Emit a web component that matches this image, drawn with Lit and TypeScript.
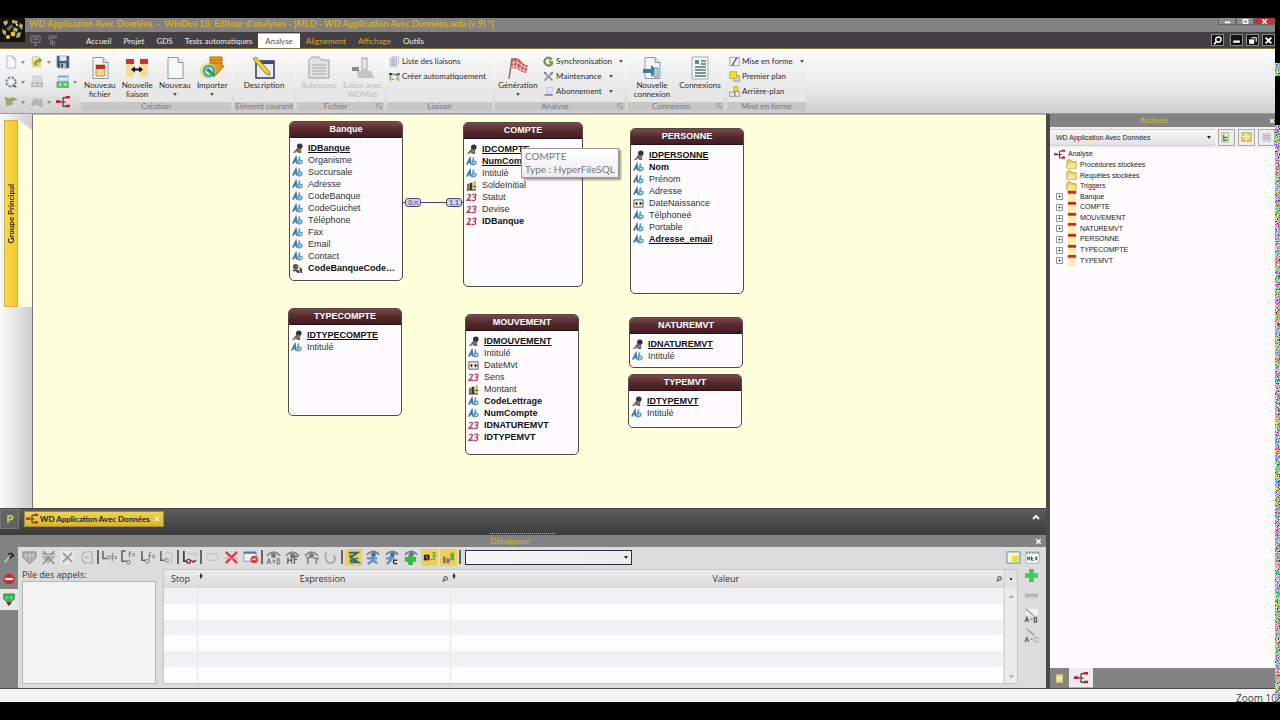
import { LitElement, html, css, svg, nothing } from "lit";
import { customElement, property } from "lit/decorators.js";
import { styleMap } from "lit/directives/style-map.js";
import { classMap } from "lit/directives/class-map.js";

const page = svg`<path d="M5 1.5h10l5 5v16H5z" fill="#f6f8fb" stroke="#8e96a3"/><path d="M15 1.5v5h5" fill="#dde3ea" stroke="#8e96a3"/>`;
const eye = svg`<path d="M1 6Q8 -1 15 6" fill="none" stroke="#888" stroke-width="2"/><circle cx="8" cy="6" r="2.6" fill="#777"/>`;
const eyeBlue = svg`<path d="M2 5Q9 -2 15 5" fill="none" stroke="#6f7f92" stroke-width="2"/><circle cx="9" cy="5" r="2.6" fill="#526a8a"/>`;
const tree = svg`<path d="M1 8h6M8 3v10M8 3h3M8 8h3M8 13h3" stroke="#3a2a2a" stroke-width="1.3" fill="none"/><path d="M0 6h5v3H0zM11 1h5v3h-5zM11 11h5v3h-5z" fill="#c3202c"/>`;

// [viewBox, drawing]
const ICONS: Record<string, [string, unknown]> = {
  logo: ["0 0 25 24", svg`<rect width="25" height="24" fill="#15130c"/><path d="M3 4l4-2 1 3-3 3zM12 2l6 1-1 3-5-1zM20 5l3 2-1 5-3-3zM2 11l4 2 0 4-3-1zM17 15l4-1-1 5-4 1zM14 9l4 2-1 3-4-1z" fill="#b5b277"/><path d="M9 8l3-2 1 3-4 4-3-2z" fill="#6a6745"/><circle cx="13" cy="16" r="2.400" fill="#e7c52b"/><circle cx="8" cy="19" r="2" fill="#e0d35a"/><circle cx="17" cy="7" r="1.300" fill="#e7c52b"/>`],
  quickA: ["0 0 12 12", svg`<path d="M1 1h10v7H1zM3 3h6M3 5h6M6 8v3M4 11h4" fill="none" stroke="#8c8a8c"/>`],
  quickB: ["0 0 12 12", svg`<path d="M1 1h10M3 3h8M1 4h3v7M6 5v6h3M5 8h5" fill="none" stroke="#8c8a8c"/>`],
  blank: ["0 0 24 24", page],
  open: ["0 0 24 24", svg`<path d="M4 3h10l4 4v12H4z" fill="#f3ead0" stroke="#b9ae85"/><path d="M3 8h16l-1 13H4z" fill="#ecd277"/><path d="M7 18q-1-9 8-11V3l6 6-6 6v-4q-4 1-3 7z" fill="#6fae4c"/>`],
  save: ["0 0 24 24", svg`<path d="M2 2h20v20H4l-2-2z" fill="#4b5e75" stroke="#2e3c4e"/><path d="M6 2h12v8H6z" fill="#dfe8f1"/><path d="M7 14h10v8H7z" fill="#b7c2ce"/><path d="M9 15h3v6H9z" fill="#33414f"/>`],
  gear: ["0 0 24 24", svg`<circle cx="12" cy="12" r="8" fill="none" stroke="#5c7f9e" stroke-width="3" stroke-dasharray="4 2.3"/><circle cx="12" cy="12" r="5.5" fill="#fff" stroke="#9ab4ca"/><path d="M16 17l5 4" stroke="#333" stroke-width="2"/>`],
  stackGrey: ["0 0 24 24", svg`<path d="M4 2h16v8H4z" fill="#ddd" stroke="#bbb"/><path d="M2 12h20v9H2z" fill="#b5b5b5"/><path d="M5 14h5v5H5zM13 14h6v5h-6z" fill="#d8d8d8"/>`],
  stackGreen: ["0 0 24 24", svg`<path d="M4 1h17v9H4z" fill="#dfeaf6" stroke="#8fb0d0"/><path d="M4 3h17" stroke="#6c97c0" stroke-width="2"/><path d="M1 11h21v11H1z" fill="#52b561"/><path d="M5 14h5v5H5zM13 14h6v5h-6z" fill="#aee3b2"/>`],
  undo: ["0 0 24 24", svg`<path d="M2 4l3 14 11-3-4-3q4-5 10-3-5-7-13-2z" fill="#9aac72" stroke="#7d8d5d"/>`],
  redo: ["0 0 24 24", svg`<path d="M3 17Q4 5 14 7l4 4 2-5 1 14-11-4 4-2q-5-4-8 4z" fill="#bdbdbd" stroke="#8d8d8d"/>`],
  tree: ["0 0 16 16", tree],
  newFile: ["0 0 24 24", svg`${page}<path d="M8 9h9v11H8z" fill="#f8d98c" stroke="#b88c3a"/><path d="M8 9h9v4H8z" fill="#c62b2b"/>`],
  link: ["0 0 24 24", svg`<path d="M1 3h8v18H1zM15 3h8v18h-8z" fill="#f4dd9b"/><path d="M1 3h8v5H1zM15 3h8v5h-8z" fill="#cf2f33"/><path d="M7 13.500h10" stroke="#111" stroke-width="2"/><path d="M10 10.500v6l-4-3zM14 10.500v6l4-3z" fill="#111"/>`],
  importer: ["0 0 24 24", svg`<path d="M10 1h12v9h2l-8 9-7-9h1z" fill="#e79a1d" stroke="#b56c0d"/><path d="M10 4h12M10 7h12" stroke="#b56c0d"/><circle cx="8" cy="15" r="8" fill="#e6e24f" opacity=".75"/><circle cx="9" cy="15" r="5" fill="#cfe8dc" stroke="#43a0c8" stroke-width="2.500"/><path d="M7 13l8 7" stroke="#3b9a4a" stroke-width="3"/>`],
  describe: ["0 0 24 24", svg`<path d="M4 5h18v17H4z" fill="#e4ecf8" stroke="#2f3e5c" stroke-width="1.500"/><path d="M4 5h18v3H4z" fill="#3a4d73"/><path d="M1 3l3-2 13 14 1 4-4-1z" fill="#f0cf3c" stroke="#a18324"/>`],
  folder: ["0 0 24 24", svg`<path d="M2 4l3-3h7l2 3h8v18H2z" fill="#e2e2e2" stroke="#9d9d9d"/><path d="M5 9h14M5 12h14M5 15h14M5 18h14" stroke="#a5a5a5"/>`],
  wdmap: ["0 0 24 24", svg`<path d="M11 1h7v15h-7z" fill="#c9c9c9"/><path d="M7 15h14l3 7H8z" fill="#c4c4c4"/><path d="M2 11h7v4H2z" fill="#8b8b8b"/><path d="M13 4h3v8h-3z" fill="#e8e8e8"/>`],
  list: ["0 0 16 16", svg`<path d="M2 3h9v12H2z" fill="#dcdde6" stroke="#9b9db0"/><path d="M4 1h10v11" fill="none" stroke="#b6b7c4"/><path d="M4 6h5M4 9h5M4 12h5" stroke="#777b96"/>`],
  auto: ["0 0 16 16", svg`<path d="M0 3h5v3H0z" fill="#3b3b3b"/><path d="M11 3h5v3h-5z" fill="#3b8a3b"/><path d="M2 6v6h5M9 6h3M13 6v6h-3M6 5h4" stroke="#333" fill="none"/><path d="M0 11h4v3H0zM11 11h5v3h-5z" fill="#c9c46a"/>`],
  flag: ["0 0 24 24", svg`<path d="M6 2L3 23" stroke="#777" stroke-width="1.500"/><path d="M6 3q5-3 9 2t7 4l-2 8q-4 0-7-3t-9-1z" fill="#cf5357"/><path d="M8 4l-1 9M12 4l-2 9M16 7l-2 8M19 9l-2 8M6 7q5-2 8 1t8 4M5 11q5-2 8 1t7 3" stroke="#f5d5d5" fill="none"/>`],
  sync: ["0 0 16 16", svg`<path d="M13 5Q8 0 4 4t0 8q4 4 9 0V9H9" fill="none" stroke="#6b8f4a" stroke-width="3"/><path d="M12 1v6H7z" fill="#8fb35c"/>`],
  tools: ["0 0 16 16", svg`<path d="M2 2l12 12M14 2L2 14" stroke="#8d97a3" stroke-width="2.500"/><path d="M1 1l4 1-2 3zM15 1l-4 1 2 3z" fill="#697482"/>`],
  laptop: ["0 0 16 16", svg`<path d="M6 2h8l-1 8H6z" fill="#e3e6f0" stroke="#b6bbcc"/><path d="M2 12h12v2H2z" fill="#5c6a9e"/>`],
  newConn: ["0 0 24 24", svg`${page}<path d="M3 13h8V9l7 6-7 6v-4H3z" fill="#3f7ca8"/><path d="M14 12h4v9h-4z" fill="#bcd3e2" stroke="#5e8aa8"/>`],
  conns: ["0 0 24 24", svg`<path d="M4 1h16v22H4z" fill="#f2f6f8" stroke="#9badb8"/><path d="M7 4h4v4H7z" fill="#4c9a6b"/><path d="M13 5h5M13 8h5M7 11h11M7 14h11M7 17h11M7 20h11" stroke="#5c6f7c" stroke-width="1.500"/>`],
  format: ["0 0 16 16", svg`<path d="M1 2h14v12H1z" fill="#eef1f6" stroke="#7d8595"/><path d="M5 13l6-10" stroke="#333" stroke-width="1.500"/><path d="M9 3h4M4 13h4" stroke="#555"/>`],
  front: ["0 0 16 16", svg`<path d="M7 7h8v8H7z" fill="#ddd" stroke="#777"/><path d="M1 1h10v10H1z" fill="#f2da3a" stroke="#b79c1e"/>`],
  back: ["0 0 16 16", svg`<path d="M7 1h6v8H7z" fill="#f2da3a" stroke="#b79c1e"/><path d="M1 9h7v6H1zM9 8h6v7H9z" fill="#eee" stroke="#777"/>`],
  launcher: ["0 0 8 8", svg`<path d="M1 7V1h6M3 3l4 4M7 4v3H4" fill="none" stroke="#888"/>`],
  key: ["0 0 12 12", svg`<circle cx="8.500" cy="3.500" r="3" fill="#333"/><path d="M6 5L1 11h3l1-2 2 2h3V6z" fill="#6a6558"/><path d="M2 10h3M7 8h2" stroke="#c8b24a"/>`],
  keyc: ["0 0 12 12", svg`<circle cx="4" cy="4" r="3" fill="#5c574b"/><path d="M1 7h4l3 1v3H6L4 9H1zM8 5l3 1v5H9z" fill="#4a4a3f"/><path d="M5 4h4" stroke="#b9a84a"/>`],
  ab: ["0 0 12 12", svg`<path d="M.800 9.500L4.300 2.500l1.200 7M2.200 7h3" fill="none" stroke="#3d7fa5" stroke-width="1.800"/><path d="M8.300 1.500L6.800 9.300q3.500.500 4-2 .300-2-3-1.400" fill="none" stroke="#5b9cc0" stroke-width="1.800"/>`],
  n23: ["0 0 12 12", svg`<path d="M1.500 3.500q3.500-2 3.300.500Q4.500 6 1 9h4.500M7 3q4-1.500 3.700.500 0 2-2.500 2.200 3 .300 2 2.500Q9 10 6.200 9" fill="none" stroke="#b8485c" stroke-width="1.500"/>`],
  money: ["0 0 12 12", svg`<path d="M1 4h3v7H1z" fill="#77853f"/><path d="M4 3h3v8H4z" fill="#3a3a2e"/><path d="M8 1h3v10H8z" fill="#e0c42a"/><path d="M8 7h3M1 11h10" stroke="#333"/>`],
  date: ["0 0 12 12", svg`<path d="M1 2h10v8H1z" fill="#f4f4f4" stroke="#555"/><path d="M2 6h3M4 4v4M7 6h4M8 4v4" stroke="#333" stroke-width="1.300"/>`],
  treeFolder: ["0 0 12 12", svg`<path d="M1 3l1-2h3l1 2h5v7H1z" fill="#f0d768" stroke="#b99b32"/><path d="M3 5h8l-1 5H1z" fill="#f8e68c"/>`],
  treeFile: ["0 0 12 12", svg`<path d="M2 0h9v12H2z" fill="#fbeeb4"/><path d="M2 0h9v3H2z" fill="#cc2a22"/>`],
  close: ["0 0 8 8", svg`<path d="M1.500 1.500l5 5M6.500 1.500l-5 5" stroke="currentColor" stroke-width="1.700"/>`],
  min: ["0 0 8 8", svg`<path d="M1 5h6" stroke="currentColor" stroke-width="2"/>`],
  max: ["0 0 8 8", svg`<path d="M1.500 2h5v4h-5z" fill="none" stroke="currentColor" stroke-width="1.500"/>`],
  restore: ["0 0 8 8", svg`<path d="M1 3h4.500v4H1z" fill="currentColor"/><path d="M3 1.500h4.300V5" fill="none" stroke="currentColor"/>`],
  search: ["0 0 8 8", svg`<circle cx="4.800" cy="3.200" r="2.400" fill="none" stroke="currentColor" stroke-width="1.300"/><path d="M3 5L1 7.300" stroke="currentColor" stroke-width="1.500"/>`],
  chevron: ["0 0 8 8", svg`<path d="M1 6l3-3 3 3" fill="none" stroke="currentColor" stroke-width="2"/>`],
  badge: ["0 0 16 16", svg`<path d="M5 14V3h4q4 0 3 3-.500 3-5 3" fill="none" stroke="#b9cb6a" stroke-width="3"/>`],
  panelA: ["0 0 12 12", svg`<path d="M1 1h7v10H1z" fill="#f5f7ef" stroke="#9cab88"/><path d="M3 3v6h4M3 6h4" stroke="#4f8a3a" fill="none" stroke-width="1.500"/>`],
  panelB: ["0 0 12 12", svg`<path d="M1 1h10v9H1z" fill="#f3d964" stroke="#b99b3a"/><path d="M6 1v9M1 5h10" stroke="#fff5c0"/>`],
  panelC: ["0 0 12 12", svg`<path d="M1 1h10v10H1z" fill="#d0d0d6"/><path d="M3 4h7M3 7h7" stroke="#a9a9b3"/>`],
  side1: ["0 0 16 16", svg`<path d="M2 14L9 6" stroke="#c9c9b8" stroke-width="2"/><path d="M7 3q5-3 7 2l-3 1-2 3" fill="none" stroke="#22221c" stroke-width="2"/>`],
  side2: ["0 0 16 16", svg`<circle cx="8" cy="8" r="7" fill="#d0252b"/><path d="M3 8h10" stroke="#fff" stroke-width="3"/>`],
  side3: ["0 0 16 18", svg`<path d="M1 1h14v7l-7 5-7-5z" fill="#35b351" stroke="#1c6e30"/><path d="M5 2v8M11 2v8M1 6h14" stroke="#7be08f"/><path d="M4 12h8l-4 5z" fill="#7d2320"/>`],
  shield: ["0 0 16 16", svg`<path d="M1 2h14v6l-7 7-7-7z" fill="#a9a9a9" stroke="#8f8f8f"/><path d="M4 3v7M8 3v10M12 3v7M2 6h12" stroke="#ccc"/>`],
  shieldX: ["0 0 16 16", svg`<path d="M1 3h14v5l-7 7-7-7z" fill="#b5b5b5"/><path d="M2 1l12 14M14 1L2 15" stroke="#8a8a8a" stroke-width="1.500"/><path d="M2 6h12" stroke="#ddd"/>`],
  crossGrey: ["0 0 16 16", svg`<path d="M1 1h14v14H1z" fill="#e9e9e9"/><path d="M3 3l10 10M13 3L3 13" stroke="#999" stroke-width="2"/>`],
  loop: ["0 0 16 16", svg`<path d="M9 2a6 6 0 1 0 0 12M10 2h4v12h-4M6 8h4" fill="none" stroke="#b0b0b0" stroke-width="1.500"/>`],
  stepA: ["0 0 16 16", svg`<path d="M1 1v8h4" fill="none" stroke="#666" stroke-width="1.700"/><circle cx="7" cy="8" r="1.800" fill="none" stroke="#777"/><path d="M11 12V5q0-2 2-1M10 7h2M13 7h3M13 9h3" stroke="#777" fill="none"/>`],
  stepB: ["0 0 16 16", svg`<path d="M5 1H1v11h5" fill="none" stroke="#666" stroke-width="1.700"/><path d="M9 8V3q0-2 2-1M8 4h3M12 4h3M12 6h3" stroke="#777" fill="none"/><circle cx="8" cy="13" r="2" fill="none" stroke="#777"/>`],
  stepC: ["0 0 16 16", svg`<path d="M2 1v10h4" fill="none" stroke="#666" stroke-width="1.700"/><circle cx="8" cy="12" r="2" fill="none" stroke="#777"/><path d="M10 10V4q0-2 2-1M9 6h3M13 6h3M13 8h3" stroke="#777" fill="none"/>`],
  stepD: ["0 0 16 16", svg`<path d="M2 1v10h4" fill="none" stroke="#666" stroke-width="1.700"/><circle cx="8" cy="11" r="2" fill="none" stroke="#777"/><path d="M7 3h7v11h-4" fill="none" stroke="#aaa" stroke-dasharray="2 1"/>`],
  stepRed: ["0 0 16 16", svg`<path d="M2 1v11h3" fill="none" stroke="#333" stroke-width="1.700"/><circle cx="7" cy="12" r="2" fill="none" stroke="#8b2431" stroke-width="1.500"/><path d="M7 4h8v4" fill="none" stroke="#b9a0a4" stroke-dasharray="2 1"/><path d="M10 11l2 2 3-2" fill="none" stroke="#8b2431" stroke-width="1.500"/>`],
  pill: ["0 0 16 16", svg`<rect x="2" y="4" width="12" height="7" rx="3" fill="#ddd" stroke="#bbb"/>`],
  crossRed: ["0 0 16 16", svg`<path d="M2 2l12 12M14 2L2 14" stroke="#e03a3a" stroke-width="2.500"/><path d="M1 9h14" stroke="#e98080"/>`],
  winRed: ["0 0 16 16", svg`<path d="M1 2h13v10H1z" fill="#eef3fa" stroke="#7d95b5"/><path d="M1 3h13" stroke="#5577a5" stroke-width="2"/><circle cx="12" cy="10" r="4" fill="#dc4040"/><path d="M10 10h4" stroke="#fff" stroke-width="1.500"/>`],
  eyeAB: ["0 0 16 16", svg`${eye}<path d="M1 15l2-6 2 6M2 13h2M7 11h3M7 13h3M12 9v6h2q2-2 0-3 1-2 0-3h-2" fill="none" stroke="#666"/>`],
  eyeHF: ["0 0 16 16", svg`${eye}<path d="M3 8v7M7 7v7M3 11h4M10 15V7h4M10 10h3" fill="none" stroke="#666" stroke-width="1.500"/>`],
  eyeT: ["0 0 16 16", svg`${eye}<path d="M4 7v8M2 8h5M10 9h5l-2 3v3" fill="none" stroke="#888" stroke-width="1.800"/>`],
  cup: ["0 0 16 16", svg`<path d="M4 2q-3 5 0 10 4 4 8 0 2-4-1-6" fill="none" stroke="#aaa" stroke-width="2"/>`],
  runY: ["0 0 16 16", svg`<path d="M3 3h9L5 8l8 5H4" fill="none" stroke="#286b8c" stroke-width="2.200"/><path d="M3 6h4M9 9h4M4 11h4" stroke="#2d7a3d" stroke-width="1.500"/>`],
  eyeRun: ["0 0 16 16", svg`${eyeBlue}<path d="M8 6v5l-5 4M8 11l5 3M2 9h11" fill="none" stroke="#5a93c0" stroke-width="2.500"/>`],
  eyeRunC: ["0 0 16 16", svg`${eyeBlue}<path d="M7 6v5l-4 4M2 9h9" fill="none" stroke="#5a93c0" stroke-width="2.500"/><path d="M14 11q-4-1-4 1.500t4 2" fill="none" stroke="#222" stroke-width="1.300"/>`],
  eyePlus: ["0 0 16 16", svg`${eyeBlue}<path d="M8 5v11M2 10h12" stroke="#35b845" stroke-width="5"/>`],
  noteY: ["0 0 16 16", svg`<path d="M2 5h6v6H2z" fill="#222"/><path d="M4 6l2 4" stroke="#f0d050"/><path d="M9 10h4V3M11 3h4M11 6h4" stroke="#68b04a" fill="none" stroke-width="1.500"/>`],
  chartY: ["0 0 16 16", svg`<path d="M2 7h3v7H2z" fill="#a86a50"/><path d="M6 9h3v5H6z" fill="#6a6a9a"/><path d="M10 3h4v8h-4z" fill="#67a84a"/>`],
  winY: ["0 0 16 16", svg`<path d="M1 2h14v12H1z" fill="#fbf7d0" stroke="#4d8ba5"/><path d="M6 6h8v7H6z" fill="#efe04a"/>`],
  hexa: ["0 0 16 16", svg`<path d="M1 2h14v12H1z" fill="#fff" stroke="#9bb"/><path d="M1 3h14" stroke="#888" stroke-width="2" stroke-dasharray="2 1"/><path d="M3 7v4M5 7v4M3 9h2M7 7v4h2M7 9h2M11 7l2 4M13 7l-2 4" stroke="#333" fill="none"/>`],
  plus: ["0 0 16 16", svg`<path d="M8 1v14M1 8h14" stroke="#3fc763" stroke-width="5"/>`],
  minus: ["0 0 16 16", svg`<path d="M1 8h14" stroke="#b5b5b5" stroke-width="4"/>`],
  editAB: ["0 0 16 16", svg`<path d="M2 1h13v7H2z" fill="#f4f4f4"/><path d="M2 1l8 7" stroke="#999" stroke-width="1.500"/><path d="M1 15l2-5 2 5M2 13h2M7 12h2M11 10v5h2q2-1 0-2.500 1-2 0-2.500z" fill="none" stroke="#555" stroke-width="1.200"/>`],
  editAE: ["0 0 16 16", svg`<path d="M3 1l8 7" stroke="#999" stroke-width="1.500"/><path d="M1 15l2-5 2 5M2 13h2M7 12h2" fill="none" stroke="#666" stroke-width="1.200"/><path d="M11 10h4v5h-4z" fill="none" stroke="#888" stroke-dasharray="1 1"/>`],
  tabFile: ["0 0 16 16", svg`<path d="M3 2h10v12H3z" fill="#e9d565"/><path d="M6 4v8M10 4v8M6 8h4" stroke="#fffbe0" stroke-width="1.500"/>`],
  pin: ["0 0 8 8", svg`<path d="M4 0v8" stroke="#222"/><path d="M4 1l2 3-2 3-2-3z" fill="#222"/>`],
};

@customElement("ui-icon")
export class UiIcon extends LitElement {
  @property() name = "";
  static styles = css`
    :host { display: inline-block; flex: none; }
    svg { display: block; width: 100%; height: 100%; }
  `;
  render() {
    const [box, art] = ICONS[this.name];
    return html`<svg viewBox=${box} aria-hidden="true">${art}</svg>`;
  }
}

type Field = [icon: string, name: string, style?: "b" | "bu"];
interface Entity { name: string; x: number; y: number; w: number; h: number; fields: Field[]; }

const ENTITIES: Entity[] = [
  { name: "Banque", x: 256, y: 6, w: 114, h: 160, fields: [["key", "IDBanque", "bu"], ["ab", "Organisme"], ["ab", "Succursale"], ["ab", "Adresse"], ["ab", "CodeBanque"], ["ab", "CodeGuichet"], ["ab", "Téléphone"], ["ab", "Fax"], ["ab", "Email"], ["ab", "Contact"], ["keyc", "CodeBanqueCode…", "b"]] },
  { name: "COMPTE", x: 430, y: 7, w: 120, h: 165, fields: [["key", "IDCOMPTE", "bu"], ["ab", "NumCompte", "bu"], ["ab", "Intitulé"], ["money", "SoldeInitial"], ["n23", "Statut"], ["n23", "Devise"], ["n23", "IDBanque", "b"]] },
  { name: "PERSONNE", x: 597, y: 13, w: 114, h: 166, fields: [["key", "IDPERSONNE", "bu"], ["ab", "Nom", "b"], ["ab", "Prénom"], ["ab", "Adresse"], ["date", "DateNaissance"], ["ab", "Télphoneé"], ["ab", "Portable"], ["ab", "Adresse_email", "bu"]] },
  { name: "TYPECOMPTE", x: 255, y: 193, w: 114, h: 108, fields: [["key", "IDTYPECOMPTE", "bu"], ["ab", "Intitulé"]] },
  { name: "MOUVEMENT", x: 432, y: 199, w: 114, h: 141, fields: [["key", "IDMOUVEMENT", "bu"], ["ab", "Intitulé"], ["date", "DateMvt"], ["n23", "Sens"], ["money", "Montant"], ["ab", "CodeLettrage", "b"], ["ab", "NumCompte", "b"], ["n23", "IDNATUREMVT", "b"], ["n23", "IDTYPEMVT", "b"]] },
  { name: "NATUREMVT", x: 596, y: 202, w: 114, h: 51, fields: [["key", "IDNATUREMVT", "bu"], ["ab", "Intitulé"]] },
  { name: "TYPEMVT", x: 595, y: 259, w: 114, h: 54, fields: [["key", "IDTYPEMVT", "bu"], ["ab", "Intitulé"]] },
];

@customElement("entity-box")
export class EntityBox extends LitElement {
  @property({ attribute: false }) entity!: Entity;
  static styles = css`
    :host { display: flex; flex-direction: column; box-sizing: border-box; border: 1px solid #55484a; border-radius: 5px; background: #fdfbfe; overflow: hidden; font: 9px/12px "Liberation Sans", Arial, sans-serif; color: #333; }
    h3 { margin: 0; font-size: 9px; line-height: 15px; text-align: center; color: #fff; background: linear-gradient(#7a484b, #552a2e 50%, #441c20); border-bottom: 1px solid #2e1013; }
    ul { margin: 0; padding: 4px 0 0 2px; list-style: none; }
    li { display: flex; align-items: center; gap: 5px; height: 12px; }
    ui-icon { width: 11px; height: 11px; }
    span { white-space: nowrap; }
    .b, .bu { font-weight: bold; color: #111; }
    .bu { text-decoration: underline; }
  `;
  render() {
    return html`<h3>${this.entity.name}</h3>
      <ul>${this.entity.fields.map(([icon, name, style]) => html`<li><ui-icon name=${icon}></ui-icon><span class=${style ?? nothing}>${name}</span></li>`)}</ul>`;
  }
}

interface Big { icon: string; text: string; drop?: boolean; off?: boolean; }
interface Small { icon: string; text: string; drop?: boolean; }
interface Group { title: string; cls: string; big?: Big[]; small?: Small[]; launch?: boolean; }

const GROUPS: Group[] = [
  { title: "Création", cls: "g-create", big: [{ icon: "newFile", text: "Nouveau fichier" }, { icon: "link", text: "Nouvelle liaison" }, { icon: "blank", text: "Nouveau", drop: true }, { icon: "importer", text: "Importer", drop: true }] },
  { title: "Elément courant", cls: "g-current", big: [{ icon: "describe", text: "Description" }] },
  { title: "Fichier", cls: "g-file", launch: true, big: [{ icon: "folder", text: "Rubriques", off: true }, { icon: "wdmap", text: "Editer avec WDMap", off: true }] },
  { title: "Liaison", cls: "g-link", small: [{ icon: "list", text: "Liste des liaisons" }, { icon: "auto", text: "Créer automatiquement" }] },
  { title: "Analyse", cls: "g-analysis", launch: true, big: [{ icon: "flag", text: "Génération", drop: true }], small: [{ icon: "sync", text: "Synchronisation", drop: true }, { icon: "tools", text: "Maintenance", drop: true }, { icon: "laptop", text: "Abonnement", drop: true }] },
  { title: "Connexion", cls: "g-conn", launch: true, big: [{ icon: "newConn", text: "Nouvelle connexion" }, { icon: "conns", text: "Connexions" }] },
  { title: "Mise en forme", cls: "g-format", small: [{ icon: "format", text: "Mise en forme", drop: true }, { icon: "front", text: "Premier plan" }, { icon: "back", text: "Arrière-plan" }] },
];

@customElement("ribbon-bar")
export class RibbonBar extends LitElement {
  static styles = css`
    :host { display: flex; box-sizing: border-box; height: 65px; padding: 3px 0 2px; gap: 3px; background: linear-gradient(#fdfdfd, #ececec 55%, #cfcfcf); border-bottom: 1px solid #9a9a9a; font: 8px/9px Lato, sans-serif; color: #2b2b2b; }
    button { display: flex; margin: 0; padding: 0; border: 0; background: none; font: inherit; color: inherit; }
    .quick { display: grid; grid-template-columns: 26px 26px 22px; grid-auto-rows: 20px; width: 78px; padding-left: 4px; box-sizing: border-box; }
    .quick button { align-items: center; gap: 3px; }
    .quick ui-icon { width: 14px; height: 14px; }
    .quick .arrow { border-top-color: #8a8a8a; }
    .arrow { flex: none; border: 2px solid transparent; border-top: 3px solid #555; border-bottom: 0; }
    .group { display: flex; flex-direction: column; flex: none; background: linear-gradient(#ffffff00, #e9e9e9); }
    .g-create { width: 150px; } .g-current { width: 60px; } .g-file { width: 87px; }
    .g-link { width: 105px; } .g-analysis { width: 130px; } .g-conn { width: 96px; } .g-format { width: 79px; }
    .body { display: flex; flex: 1; min-height: 0; }
    .big { flex-direction: column; align-items: center; flex: 1; padding-top: 4px; min-width: 0; }
    .big ui-icon { width: 24px; height: 24px; margin-bottom: 1px; }
    .big .arrow { margin-top: 3px; }
    .off { color: #bcbcbc; }
    .g-analysis .big { flex: none; width: 46px; }
    .smalls { display: flex; flex-direction: column; padding-left: 2px; padding-top: 2px; }
    .small { align-items: center; gap: 2px; height: 15px; white-space: nowrap; }
    .small ui-icon { width: 11px; height: 11px; }
    .small .arrow { margin-left: 5px; }
    .title { display: flex; height: 9px; background: #c6c6c6; color: #777; }
    .title span { flex: 1; text-align: center; white-space: nowrap; }
    .title ui-icon { width: 6px; height: 6px; margin: 1px 2px; }
  `;
  render() {
    const q: [string, boolean][] = [["blank", true], ["open", true], ["save", false], ["gear", true], ["stackGrey", false], ["stackGreen", true], ["undo", true], ["redo", true], ["tree", false]];
    const arrow = html`<span class="arrow"></span>`;
    return html`
      <div class="quick">${q.map(([i, d]) => html`<button aria-label=${i}><ui-icon name=${i}></ui-icon>${d ? arrow : nothing}</button>`)}</div>
      ${GROUPS.map((g) => html`<section class="group ${g.cls}">
        <div class="body">
          ${(g.big ?? []).map((b) => html`<button class=${classMap({ big: true, off: !!b.off })}><ui-icon name=${b.icon}></ui-icon><span>${b.text}</span>${b.drop ? arrow : nothing}</button>`)}
          ${g.small ? html`<div class="smalls">${g.small.map((s) => html`<button class="small"><ui-icon name=${s.icon}></ui-icon>${s.text}${s.drop ? arrow : nothing}</button>`)}</div>` : nothing}
        </div>
        <div class="title"><span>${g.title}</span>${g.launch ? html`<ui-icon name="launcher"></ui-icon>` : nothing}</div>
      </section>`)}`;
  }
}

@customElement("debug-panel")
export class DebugPanel extends LitElement {
  static styles = css`
    :host { display: flex; flex-direction: column; height: 153px; background: #838383; font: 9px/12px "Open Sans", sans-serif; color: #333; }
    button { display: flex; align-items: center; justify-content: center; margin: 0; padding: 0; border: 0; background: none; color: inherit; }
    .head { display: flex; align-items: center; height: 12px; padding-right: 4px; color: #fff; }
    .head h2 { flex: 1; margin: 0; padding-right: 15px; text-align: center; font: 8px/12px Lato, sans-serif; color: #d6b92c; }
    .head ui-icon { width: 7px; height: 7px; }
    .row { display: flex; flex: 1; min-height: 0; }
    .side { display: flex; flex-direction: column; width: 18px; }
    .side button { height: 21px; }
    .side ui-icon { width: 12px; height: 14px; }
    .side .on { background: #e6e6e6; }
    .main { display: flex; flex-direction: column; flex: 1; min-width: 0; background: #dcdcdc; }
    .tools { display: flex; align-items: center; height: 20px; gap: 2px; padding: 0 5px 0 3px; }
    .tools button { width: 17px; height: 17px; }
    .tools ui-icon { width: 15px; height: 15px; }
    .tools .lit { background: #f0cf52; }
    .sep { width: 2px; height: 14px; background: #666; }
    .fill { flex: 1; }
    select { width: 167px; height: 15px; appearance: none; border: 1px solid #2d2d3c; border-radius: 0; margin: 0; background: linear-gradient(90deg, #f6f6f6, #ececec); }
    .combo { position: relative; display: flex; margin-left: 2px; }
    .combo::after { content: ""; position: absolute; right: 4px; top: 6px; border: 2px solid transparent; border-top: 3px solid #222; border-bottom: 0; }
    .content { display: flex; flex: 1; min-height: 0; }
    .stack { display: flex; flex-direction: column; width: 140px; padding: 2px 2px 4px 4px; box-sizing: border-box; }
    .stack h3 { margin: 0; font: inherit; }
    .stack div { flex: 1; background: #f3f3f3; border: 1px solid #b5b5b5; }
    .grid { display: flex; flex: 1; margin: 2px 2px 4px 5px; min-width: 0; border: 1px solid #c6c6c6; background: #fdfdfd; overflow: hidden; }
    table { width: 100%; border-collapse: collapse; table-layout: fixed; }
    .c-stop { width: 33px; } .c-expr { width: 253px; }
    thead { background: linear-gradient(#ececec, #dadada); }
    th { height: 18px; padding: 0; font-weight: normal; }
    th ui-icon { float: right; width: 6px; height: 6px; margin: 3px 2px; }
    th .pin { float: left; margin: 0 1px; }
    td { height: 15px; padding: 0; border-right: 1px solid #e6e6e6; }
    tbody tr:nth-child(odd) { background: #f1f0f2; }
    .scroll { display: flex; flex-direction: column; justify-content: space-between; align-items: center; width: 13px; padding: 8px 0 4px; box-sizing: border-box; border-left: 1px solid #d0d0d0; background: linear-gradient(#e2e2e2 19px, #ececec 19px); color: #999; }
    .scroll .more { width: 2px; height: 2px; background: #333; }
    .scroll ui-icon { width: 5px; height: 5px; }
    .scroll .up { margin-bottom: auto; margin-top: 14px; }
    .scroll .down { transform: rotate(180deg); }
    .edit { display: flex; flex-direction: column; align-items: center; gap: 5px; width: 26px; padding: 1px 4px 0 0; box-sizing: border-box; }
    .edit ui-icon { width: 15px; height: 15px; }
  `;
  render() {
    const btn = (n: string) => n === "|" ? html`<span class="sep"></span>`
      : html`<button class=${/Y$/.test(n) && n !== "winY" ? "lit" : nothing} aria-label=${n}><ui-icon name=${n}></ui-icon></button>`;
    return html`
      <div class="head"><h2>Débogueur</h2><ui-icon name="close"></ui-icon></div>
      <div class="row">
        <div class="side"><button aria-label="outils"><ui-icon name="side1"></ui-icon></button><button aria-label="erreurs"><ui-icon name="side2"></ui-icon></button><button class="on" aria-label="débogueur"><ui-icon name="side3"></ui-icon></button></div>
        <div class="main">
          <div class="tools">
            ${["shield", "shieldX", "crossGrey", "loop", "|", "stepA", "stepB", "stepC", "stepD", "|", "stepRed", "|", "pill", "crossRed", "winRed", "|", "eyeAB", "eyeHF", "eyeT", "cup", "|", "runY", "eyeRun", "eyeRunC", "eyePlus", "noteY", "chartY", "|"].map(btn)}
            <div class="combo"><select aria-label="Expression à évaluer"><option></option></select></div>
            <span class="fill"></span>${btn("winY")}${btn("hexa")}
          </div>
          <div class="content">
            <div class="stack"><h3>Pile des appels:</h3><div></div></div>
            <div class="grid">
              <table>
                <colgroup><col class="c-stop"><col class="c-expr"><col></colgroup>
                <thead><tr><th>Stop</th><th><ui-icon class="pin" name="pin"></ui-icon><ui-icon name="search"></ui-icon>Expression</th><th><ui-icon class="pin" name="pin"></ui-icon><ui-icon name="search"></ui-icon>Valeur</th></tr></thead>
                <tbody>${[0, 1, 2, 3, 4, 5].map(() => html`<tr><td></td><td></td><td></td></tr>`)}</tbody>
              </table>
              <div class="scroll"><span class="more"></span><ui-icon class="up" name="chevron"></ui-icon><ui-icon class="down" name="chevron"></ui-icon></div>
            </div>
            <div class="edit">${["plus", "minus", "editAB", "editAE"].map((n) => html`<button aria-label=${n}><ui-icon name=${n}></ui-icon></button>`)}</div>
          </div>
        </div>
      </div>`;
  }
}

@customElement("analysis-panel")
export class AnalysisPanel extends LitElement {
  static styles = css`
    :host { display: flex; flex-direction: column; width: 225px; background: #fdfbfe; font: 7px/10px "Liberation Sans", Arial, sans-serif; color: #222; }
    .head { display: flex; align-items: center; height: 13px; background: #838383; color: #fff; }
    h2 { flex: 1; margin: 0; padding-right: 12px; text-align: center; font: 8px/13px Lato, sans-serif; color: #d6b92c; }
    .head ui-icon { width: 6px; height: 6px; }
    .pick { display: flex; gap: 3px; padding: 2px 0; background: #f1f1f1; }
    .combo { position: relative; display: flex; flex: 1; }
    .combo::after { content: ""; position: absolute; right: 4px; top: 7px; border: 2px solid transparent; border-top: 3px solid #222; border-bottom: 0; }
    select { flex: 1; height: 17px; appearance: none; margin: 0; padding: 0 6px; border: 1px solid #cfcfcf; border-width: 1px 0; border-radius: 0; background: linear-gradient(#f7f7f7, #e2e2e2); font: inherit; color: inherit; }
    button { display: flex; align-items: center; justify-content: center; width: 17px; height: 17px; margin: 0; padding: 0; border: 1px solid #aaa; background: #eee; }
    button ui-icon { width: 11px; height: 11px; }
    .tree { display: grid; grid-auto-rows: 1fr; height: 117px; margin: 0; padding: 1px 4px 0; list-style: none; }
    .tree li { display: flex; align-items: center; min-height: 0; }
    .tree ui-icon { width: 11px; height: 11px; margin-right: 3px; }
    .node { padding-left: 12px; }
    .box { display: flex; align-items: center; justify-content: center; box-sizing: border-box; width: 7px; height: 7px; margin: 0 3px 0 2px; border: 1px solid #999; font-size: 7px; line-height: 5px; }
    .tabs { display: flex; height: 20px; margin-top: auto; background: #838383; }
    .tabs button { width: 19px; height: 20px; border: 0; background: none; }
    .tabs .on { width: 24px; background: #ececec; border-bottom: 1px solid #d6b92c; }
    .tabs .on ui-icon { width: 14px; height: 14px; }
  `;
  render() {
    return html`
      <div class="head"><h2>Analyse</h2><ui-icon name="close"></ui-icon></div>
      <div class="pick">
        <div class="combo"><select aria-label="Analyse"><option>WD Application Avec Données</option></select></div>
        <button aria-label="Arbre"><ui-icon name="panelA"></ui-icon></button><button aria-label="Grille"><ui-icon name="panelB"></ui-icon></button><button aria-label="Liste"><ui-icon name="panelC"></ui-icon></button>
      </div>
      <ul class="tree">
        <li><ui-icon name="tree"></ui-icon>Analyse</li>
        ${["Procédures stockées", "Requêtes stockées", "Triggers"].map((t) => html`<li class="node"><ui-icon name="treeFolder"></ui-icon>${t}</li>`)}
        ${["Banque", "COMPTE", "MOUVEMENT", "NATUREMVT", "PERSONNE", "TYPECOMPTE", "TYPEMVT"].map((t) => html`<li><span class="box">+</span><ui-icon name="treeFile"></ui-icon>${t}</li>`)}
      </ul>
      <div class="tabs"><button aria-label="Projet"><ui-icon name="tabFile"></ui-icon></button><button class="on" aria-label="Analyse"><ui-icon name="tree"></ui-icon></button></div>`;
  }
}

@customElement("app-root")
export class AppRoot extends LitElement {
  static styles = css`
    :host { display: grid; grid-template-columns: minmax(0, 1fr) 5px; box-sizing: border-box; height: 100vh; padding: 18px 0; overflow: hidden; background: #000; font: 8px/10px Lato, sans-serif; }
    button { display: flex; align-items: center; justify-content: center; margin: 0; padding: 0; border: 0; background: none; font: inherit; color: inherit; }
    .app { display: flex; flex-direction: column; min-height: 0; background: #4a4a4c; }
    .noise { width: 5px; height: 100%; }
    header { display: grid; grid-template-columns: 25px minmax(0, 1fr); grid-template-rows: 14px 16px; background: #424042; border-bottom: 1px solid #8a7636; }
    .logo { grid-row: 1 / 3; width: 25px; height: 24px; z-index: 1; }
    .titlebar { display: flex; justify-content: space-between; margin-left: -25px; padding-left: 29px; background: #838383; }
    h1 { margin: 0; font-size: 9px; line-height: 12px; font-weight: bold; color: #d3ab2c; white-space: pre; }
    .wins { display: flex; height: 7px; color: #fff; }
    .wins button { width: 18px; background: #8d8d8d; border: 1px solid #666; border-top: 0; }
    .wins .x { width: 21px; background: #c4313a; }
    .wins ui-icon { width: 7px; height: 7px; }
    nav { display: flex; align-items: stretch; color: #f0f0f0; }
    nav a { display: flex; align-items: center; padding: 2px 6px 0; color: inherit; text-decoration: none; white-space: nowrap; }
    .mini { display: flex; align-items: center; gap: 6px; padding: 0 22px 0 5px; }
    .mini ui-icon { width: 11px; height: 11px; }
    nav .on { margin-top: 1px; padding: 0 7px; background: #fff; color: #5f4c3a; border-top: 1px solid #e3b23a; }
    nav .gold { color: #dfa51f; }
    .mdi { display: flex; align-items: center; gap: 3px; margin-left: auto; }
    .mdi button { width: 13px; height: 12px; border: 1px solid #888; background: #111; color: #fff; box-sizing: border-box; }
    .mdi button:first-child { margin-right: 3px; }
    .mdi ui-icon { width: 9px; height: 9px; }
    main { display: flex; flex: 1; min-height: 0; gap: 4px; padding-bottom: 1px; }
    .left { display: flex; flex-direction: column; flex: 1; min-width: 0; }
    .work { display: flex; flex: 1; min-height: 0; }
    .strip { display: flex; align-items: flex-start; width: 32px; padding: 6px 0 0 4px; box-sizing: border-box; background: linear-gradient(90deg, #fafafa, #cfcfcf); }
    .strip .group { box-sizing: border-box; width: 14px; height: 187px; background: linear-gradient(90deg, #f9d64c, #f5c92f); border: 1px solid #d4b13e; color: #222; font-weight: bold; }
    .strip .group span { writing-mode: vertical-rl; transform: rotate(180deg); }
    .paper { flex: 1; height: 187px; background: #ffffdc; clip-path: polygon(0 0, 100% 10px, 100% 100%, 0 100%); }
    .canvas { position: relative; flex: 1; overflow: hidden; background: #ffffdc; border-left: 1px solid #777; border-top: 1px solid #bbb; }
    entity-box, .rel, .card, .tip { position: absolute; }
    .rel { left: 370px; top: 87px; width: 61px; height: 1px; background: #44446c; }
    .card { top: 83px; box-sizing: border-box; height: 9px; width: 16px; border: 1px solid #4a4a80; border-radius: 3px; background: #cfcff2; color: #33336e; font: 7px/7px "Liberation Sans", Arial, sans-serif; text-align: center; }
    .many { left: 372px; } .one { left: 413px; }
    .tip { left: 488px; top: 33px; box-sizing: border-box; padding: 1px 3px; border: 1px solid #999; background: linear-gradient(#fff, #ececf2); box-shadow: 2px 2px 2px #0006; color: #777; font-size: 10px; line-height: 13px; white-space: nowrap; }
    .docs { display: flex; align-items: flex-start; height: 24px; padding-right: 6px; background: linear-gradient(#5c5c5a, #3d3d3d); border-top: 1px solid #444; color: #eee; }
    .docs .p { width: 19px; height: 20px; margin-right: 5px; background: #626262; border: 1px solid #777; box-sizing: border-box; }
    .docs .p ui-icon { width: 10px; height: 12px; }
    .docs .doc { height: 16px; margin-top: 2px; padding: 0 3px 0 1px; gap: 2px; background: linear-gradient(#ecd25c, #d8b431); border: 1px solid #a98b2a; box-sizing: border-box; color: #222; font-weight: bold; }
    .doc ui-icon { width: 12px; height: 12px; }
    .doc ui-icon:last-child { width: 6px; height: 6px; margin-left: 2px; color: #fff8d0; }
    .docs .up { margin: 4px 0 0 auto; }
    .up ui-icon { width: 8px; height: 8px; }
    .grip { height: 2px; background: #3d3d3d; display: flex; justify-content: center; }
    .grip span { width: 66px; height: 1px; background: repeating-linear-gradient(90deg, #bbb 0 1px, #3d3d3d 1px 2px); }
    footer { height: 13px; overflow: hidden; background: #f2f2f2; font: 10px/18px "Open Sans", sans-serif; color: #444; display: flex; justify-content: flex-end; }
    footer span { width: 39px; white-space: nowrap; overflow: hidden; }
  `;
  render() {
    return html`
      <div class="app">
        <header>
          <ui-icon class="logo" name="logo"></ui-icon>
          <div class="titlebar"><h1>WD Application Avec Données  -  WinDev 18: Editeur d'analyses - [MLD - WD Application Avec Données.wda (v 9) *]</h1>
            <div class="wins"><button aria-label="Réduire"><ui-icon name="min"></ui-icon></button><button aria-label="Agrandir"><ui-icon name="max"></ui-icon></button><button class="x" aria-label="Fermer"><ui-icon name="close"></ui-icon></button></div>
          </div>
          <nav>
            <div class="mini"><ui-icon name="quickA"></ui-icon><ui-icon name="quickB"></ui-icon></div>
            ${["Accueil", "Projet", "GDS", "Tests automatiques"].map((t) => html`<a href="#">${t}</a>`)}
            <a href="#" class="on">Analyse</a><a href="#" class="gold">Alignement</a><a href="#" class="gold">Affichage</a><a href="#">Outils</a>
            <div class="mdi"><button aria-label="Rechercher"><ui-icon name="search"></ui-icon></button><button aria-label="Réduire le document"><ui-icon name="min"></ui-icon></button><button aria-label="Restaurer le document"><ui-icon name="restore"></ui-icon></button><button aria-label="Fermer le document"><ui-icon name="close"></ui-icon></button></div>
          </nav>
        </header>
        <ribbon-bar></ribbon-bar>
        <main>
          <div class="left">
            <div class="work">
              <div class="strip"><button class="group"><span>Groupe Principal</span></button><div class="paper"></div></div>
              <div class="canvas">
                ${ENTITIES.map((e) => html`<entity-box .entity=${e} style=${styleMap({ left: `${e.x}px`, top: `${e.y}px`, width: `${e.w}px`, height: `${e.h}px` })}></entity-box>`)}
                <div class="rel"></div><div class="card many">0,n</div><div class="card one">1,1</div>
                <div class="tip">COMPTE<br>Type : HyperFileSQL</div>
              </div>
            </div>
            <div class="docs"><button class="p" aria-label="Projet"><ui-icon name="badge"></ui-icon></button>
              <button class="doc"><ui-icon name="tree"></ui-icon>WD Application Avec Données<ui-icon name="close"></ui-icon></button>
              <button class="up" aria-label="Déplier"><ui-icon name="chevron"></ui-icon></button></div>
            <div class="grip"><span></span></div>
            <debug-panel></debug-panel>
          </div>
          <analysis-panel></analysis-panel>
        </main>
        <footer><span>Zoom 100%</span></footer>
      </div>
      <svg class="noise" aria-hidden="true"><filter id="n" x="0" y="0" width="100%" height="100%"><feTurbulence type="fractalNoise" baseFrequency="0.9" numOctaves="2"/><feColorMatrix values="3 0 0 0 -1  0 3 0 0 -1  0 0 3 0 -1  0 0 0 0 1"/></filter><rect y="45" width="5" height="13" filter="url(#n)"/><rect y="107" width="5" height="577" filter="url(#n)"/></svg>`;
  }
}
